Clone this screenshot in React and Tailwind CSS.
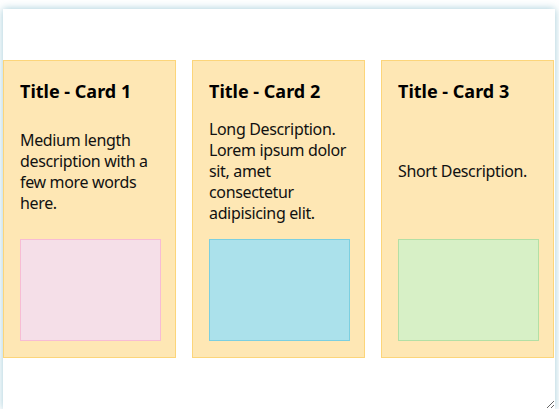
import React from 'react';

const cards = [
  {
    title: 'Title - Card 1',
    description: 'Medium length description with a few more words here.',
    box: 'bg-[#f5dfe8] border-[#f7bcd4]',
  },
  {
    title: 'Title - Card 2',
    description: 'Long Description. Lorem ipsum dolor sit, amet consectetur adipisicing elit.',
    box: 'bg-[#abe1eb] border-[#7ccfe0]',
  },
  {
    title: 'Title - Card 3',
    description: 'Short Description.',
    box: 'bg-[#d7f0c6] border-[#b3dfa5]',
  },
];

const Card = ({ title, description, box }) => {
  return (
    <div className="flex flex-col w-[173px] shrink-0 bg-[#fee7b4] border border-[#fcd57a] pl-4 pr-[14px] pt-[18px] pb-4">
      <h3 className="text-[18px] leading-6 font-bold text-black">{title}</h3>
      <div className="flex-1 flex items-center mt-[16px] mb-[15px]">
        <p className="text-[16px] leading-[21px] tracking-[-0.35px] text-[#111]">{description}</p>
      </div>
      <div className={`h-[102px] w-[141px] border ${box}`}></div>
    </div>
  );
};

const App = () => {
  return (
    <div className="h-[409px] w-full bg-white pl-[3px] pr-[4px] pt-[9px] overflow-hidden" style={{ fontFamily: '"Noto Sans", "Open Sans", sans-serif' }}>
      <div className="h-[400px] bg-white shadow-[0_0_8px_rgba(120,180,198,0.7)] resize overflow-auto">
        <div className="flex gap-4 pt-[51px]">
          {cards.map((c) => (
            <Card key={c.title} {...c} />
          ))}
        </div>
      </div>
    </div>
  );
};

export default App;
